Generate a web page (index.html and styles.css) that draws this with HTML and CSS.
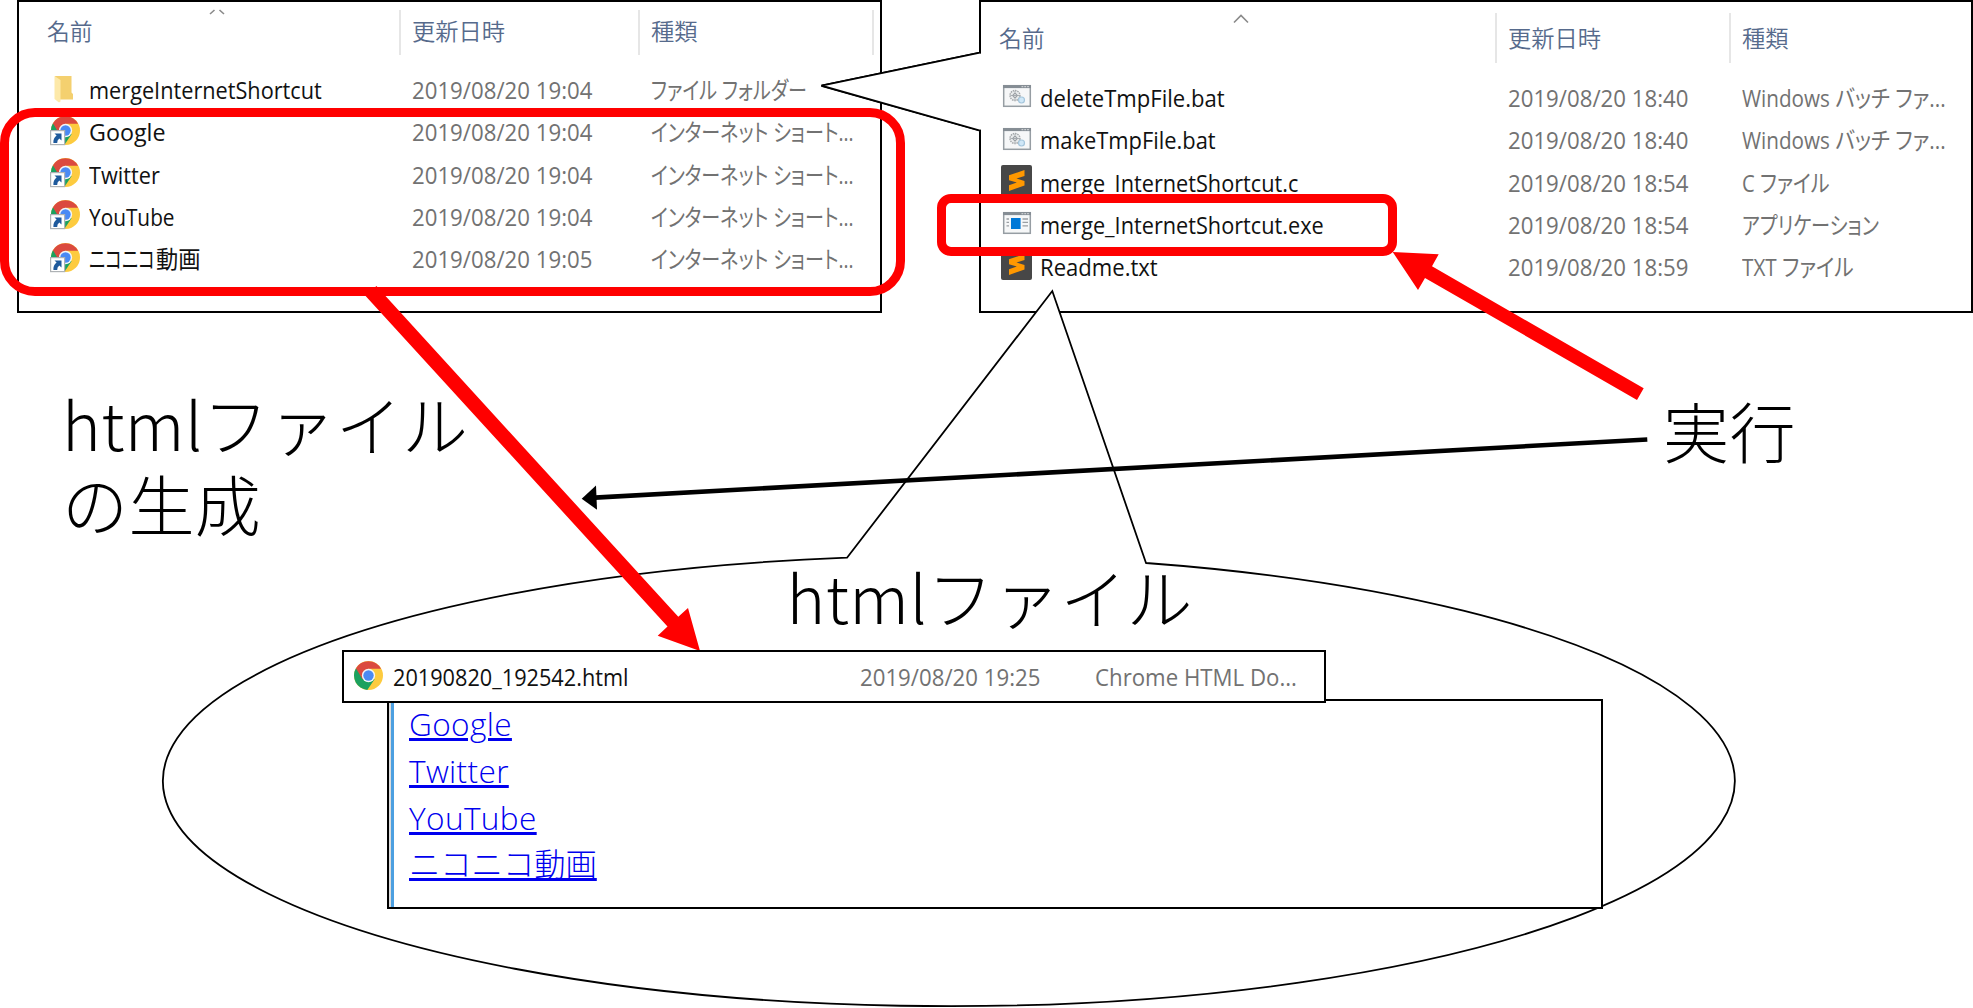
FILE: index.html
```html
<!DOCTYPE html>
<html lang="ja">
<head>
<meta charset="utf-8">
<title>mergeInternetShortcut</title>
<link rel="stylesheet" href="styles.css">
</head>
<body>
<svg class="defs" width="0" height="0" aria-hidden="true">
  <symbol id="chrome" viewBox="0 0 48 48">
    <circle cx="24" cy="24" r="24" fill="#fdcb3f"/>
    <path d="M24 24 3.2 12A24 24 0 0 0 22 47.9L34 30Z" fill="#1ba15f"/>
    <path d="M24 13H44.8A24 24 0 0 0 3.2 12L14 30Z" fill="#db4a3f"/>
    <circle cx="24" cy="24" r="11" fill="#f4f6f8"/>
    <circle cx="24" cy="24" r="8.6" fill="#4a8af4"/>
  </symbol>
  <symbol id="shortcut" viewBox="0 0 30 30">
    <svg x="1" y="0" width="29" height="29"><use href="#chrome"/></svg>
    <rect x=".6" y="14.6" width="14" height="14" fill="#fff" stroke="#aeb2b5" stroke-width="1.2"/>
    <path d="M4.5 17.5H11.5V24.5L9.3 22.4Q7 24 7.2 27H3.4Q3 22.5 6.6 19.6Z" fill="#1f5a9c"/>
  </symbol>
  <symbol id="folder" viewBox="0 0 20 28">
    <path d="M1 1H17.5V17.5L19 19V24.5H5Z" fill="#f4d06f"/>
    <path d="M.5 1 6.5 5V26.5L5 27.5.5 24Z" fill="#fde9a9"/>
  </symbol>
  <symbol id="bat" viewBox="0 0 30 24">
    <rect x="1.7" y="1.7" width="26.6" height="20.6" fill="#f6f7f8" stroke="#969da3" stroke-width="1.5"/>
    <path d="M1 2.6H29" stroke="#858d94" stroke-width="3"/>
    <path d="M19.5 2.6H27" stroke="#c9cdd0" stroke-width="1.2" stroke-dasharray="1.8 1"/>
    <circle cx="13" cy="11.5" r="5" fill="#e9ebec" stroke="#a4a8ab" stroke-width="1.4" stroke-dasharray="1.5 .8"/>
    <circle cx="13" cy="11.5" r="2" fill="#fff" stroke="#92989d"/>
    <path d="M8.5 11.5H17.5M13 7V16" stroke="#92989d" stroke-width=".7"/>
    <circle cx="19.5" cy="16" r="3" fill="#cfe7f7" stroke="#a5c6dc" stroke-width="1.2"/>
  </symbol>
  <symbol id="exe" viewBox="0 0 30 24">
    <rect x="1.7" y="1.7" width="26.6" height="20.6" fill="#f6f7f8" stroke="#969da3" stroke-width="1.5"/>
    <path d="M1 2.6H29" stroke="#858d94" stroke-width="3"/>
    <path d="M19.5 2.6H27" stroke="#c9cdd0" stroke-width="1.2" stroke-dasharray="1.8 1"/>
    <rect x="9" y="7" width="9.6" height="11" fill="#0078d7"/>
    <path d="M4.5 8H7M4.5 11.4H7M4.5 14.8H7M20.5 8H26M20.5 11.4H26M20.5 14.8H26" stroke="#9a9fa3" stroke-width="1.3"/>
  </symbol>
  <symbol id="sublime" viewBox="0 0 31 31">
    <rect width="31" height="31" rx="2" fill="#474747"/>
    <path d="M8 10.3 23.5 5V11L15.5 13.6 23.5 16V20.5L8 26V20.3L15.8 17.6 8 15.2Z" fill="#ff9800"/>
  </symbol>
</svg>

<main class="diagram">
  <section class="pane pane-left">
    <svg class="caret" width="18" height="8" viewBox="0 0 18 8"><path d="M2 6 6.5 2M11.5 2 16 6"/></svg>
    <header class="row head">
      <span class="cell"><span class="t s95">名前</span></span>
      <span class="cell"><span class="t s100">更新日時</span></span>
      <span class="cell"><span class="t s100">種類</span></span>
      <span class="cell"></span>
    </header>
    <div class="row">
      <svg class="icon folder"><use href="#folder"/></svg>
      <span class="name t s90">mergeInternetShortcut</span><span class="t s93">2019/08/20 19:04</span><span class="t s79">ファイル フォルダー</span>
    </div>
    <div class="row">
      <svg class="icon link"><use href="#shortcut"/></svg>
      <span class="name t s97">Google</span><span class="t s93">2019/08/20 19:04</span><span class="t s79">インターネット ショート...</span>
    </div>
    <div class="row">
      <svg class="icon link"><use href="#shortcut"/></svg>
      <span class="name t s90">Twitter</span><span class="t s93">2019/08/20 19:04</span><span class="t s79">インターネット ショート...</span>
    </div>
    <div class="row">
      <svg class="icon link"><use href="#shortcut"/></svg>
      <span class="name t s87">YouTube</span><span class="t s93">2019/08/20 19:04</span><span class="t s79">インターネット ショート...</span>
    </div>
    <div class="row">
      <svg class="icon link"><use href="#shortcut"/></svg>
      <span class="name t s93"><span class="kana">ニコニコ</span>動画</span><span class="t s93">2019/08/20 19:05</span><span class="t s79">インターネット ショート...</span>
    </div>
  </section>

  <section class="pane pane-right">
    <svg class="caret" width="18" height="10" viewBox="0 0 18 10"><path d="M2 8.5 9 1.5 16 8.5"/></svg>
    <header class="row head">
      <span class="cell"><span class="t s95">名前</span></span>
      <span class="cell"><span class="t s100">更新日時</span></span>
      <span class="cell"><span class="t s100">種類</span></span>
    </header>
    <div class="row">
      <svg class="icon app"><use href="#bat"/></svg>
      <span class="name t s92">deleteTmpFile.bat</span><span class="t s93">2019/08/20 18:40</span><span class="t s86">Windows バッチ ファ...</span>
    </div>
    <div class="row">
      <svg class="icon app"><use href="#bat"/></svg>
      <span class="name t s91">makeTmpFile.bat</span><span class="t s93">2019/08/20 18:40</span><span class="t s86">Windows バッチ ファ...</span>
    </div>
    <div class="row">
      <svg class="icon sublime"><use href="#sublime"/></svg>
      <span class="name t s90">merge_InternetShortcut.c</span><span class="t s93">2019/08/20 18:54</span><span class="t s84">C ファイル</span>
    </div>
    <div class="row">
      <svg class="icon app"><use href="#exe"/></svg>
      <span class="name t s90">merge_InternetShortcut.exe</span><span class="t s93">2019/08/20 18:54</span><span class="t s80">アプリケーション</span>
    </div>
    <div class="row">
      <svg class="icon sublime"><use href="#sublime"/></svg>
      <span class="name t s92">Readme.txt</span><span class="t s93">2019/08/20 18:59</span><span class="t s86">TXT ファイル</span>
    </div>
  </section>

  <svg class="layer" viewBox="0 0 1973 1008">
    <path class="outline" d="M980 52.7 821.5 85.7 980 130.5V312H1972V1H980Z"/>
    <path class="callout" d="M980 52.7 821.5 85.7 980 130.5"/>
    <path class="callout" d="M847 557.7 1052.3 291 1146 563A786 225.2 0 1 1 847 557.7Z"/>
  </svg>

  <div class="mark mark-left"></div>
  <div class="mark mark-right"></div>

  <p class="label label-make">htmlファイル<br>の生成</p>
  <p class="label label-file">htmlファイル</p>
  <p class="label label-run">実行</p>

  <section class="page">
    <a>Google</a>
    <a>Twitter</a>
    <a>YouTube</a>
    <a class="cjk">ニコニコ動画</a>
  </section>

  <svg class="layer" viewBox="0 0 1973 1008">
    <path class="red" d="M376.4 286.1 678.3 616.7 688 608 700 651 657.7 635.7 667.5 626.5 365.6 295.9Z"/>
    <path class="red" d="M1643.7 388.3 1432 266.3 1438.7 254.3 1392.7 252 1418 290 1425 278 1637 400Z"/>
    <path class="black-line" d="M595 497.6 1647.3 439.5"/>
    <path d="M581.7 498.7 596 485.5 597 509.7Z"/>
  </svg>

  <section class="output row">
    <svg class="icon chrome"><use href="#chrome"/></svg>
    <span class="name t s90">20190820_192542.html</span><span class="t s93">2019/08/20 19:25</span><span class="t s93">Chrome HTML Do...</span>
  </section>
</main>
</body>
</html>
```
FILE: styles.css
```css
* { box-sizing: border-box; }
body { margin: 0; background: #fff; }
.defs { position: absolute; }

.diagram {
  position: relative;
  width: 1973px;
  height: 1008px;
  overflow: hidden;
  font: 24px/42.2px "Open Sans", "Noto Sans CJK JP", sans-serif;
  color: #727272;
}

/* file list windows */
.pane { position: absolute; top: 0; height: 313px; }
.pane-left { left: 17px; width: 865px; border: 2px solid #000; padding-top: 8px; --cols: 69.5px 323.5px 239px 1fr; }
.pane-right { left: 979px; width: 994px; padding-top: 13px; --cols: 61px 468px 234px 1fr; }

.row { display: grid; grid-template-columns: var(--cols); height: 42.2px; align-items: center; white-space: nowrap; }
.name { color: #111; }
.icon { display: block; }
.folder { width: 20px; height: 28px; margin: -2px 0 0 35px; }
.link { width: 30px; height: 30px; margin: -3px 0 0 31px; }
.app { width: 30px; height: 24px; margin: -4px 0 0 23px; }
.sublime { width: 31px; height: 31px; margin: -5px 0 0 22px; }
.chrome { width: 29px; height: 29px; margin: -4px 0 0 10px; }

.head { height: auto; color: #566a8c; font-size: 23px; font-weight: 350; }
.head .cell { height: 45px; border-right: 2px solid #e6e6e6; line-height: 42px; }
.pane-left .head { grid-template-columns: 382px 239px 234px 1fr; margin-bottom: 14.3px; }
.pane-left .head .cell { padding-left: 11px; }
.pane-left .head .cell:first-child { padding-left: 28px; }
.pane-left .head .cell:last-child { border: 0; }
.pane-right .head { grid-template-columns: 518px 234px 1fr; margin-bottom: 14.3px; }
.pane-right .head .cell { height: 50px; line-height: 51px; padding-left: 11px; }
.pane-right .head .cell:first-child { padding-left: 20px; }
.pane-right .head .cell:last-child { border: 0; }

.caret { position: absolute; fill: none; stroke: #8a8a8a; stroke-width: 1.6; }
.pane-left .caret { left: 189px; top: 6px; }
.pane-right .caret { left: 253px; top: 14px; }

/* condensed text */
.t { display: inline-block; justify-self: start; transform-origin: 0 50%; transform: scaleX(var(--sx)); font-feature-settings: "palt"; }
.s79 { --sx: .795; }
.s80 { --sx: .8; }
.s84 { --sx: .838; }
.s86 { --sx: .861; }
.s87 { --sx: .867; }
.s90 { --sx: .904; }
.s91 { --sx: .912; }
.s92 { --sx: .92; }
.s93 { --sx: .926; }
.s95 { --sx: .99; }
.s97 { --sx: .97; }
.s100 { --sx: 1.012; }
.kana { display: inline-block; transform: scaleX(.79); transform-origin: 0 50%; margin-right: -17.5px; }

/* connectors and callouts */
.layer { position: absolute; inset: 0; width: 1973px; height: 1008px; }
.outline { fill: none; stroke: #000; stroke-width: 2; }
.callout { fill: #fff; stroke: #000; stroke-width: 1.8; }
.red { fill: #f00; }
.black-line { stroke: #000; stroke-width: 4.6; }

.mark { position: absolute; border: 9px solid #f00; }
.mark-left { left: 0; top: 108px; width: 905px; height: 188px; border-radius: 35px; }
.mark-right { left: 937px; top: 194px; width: 460px; height: 62px; border-radius: 14px; }

.label { position: absolute; margin: 0; color: #000; font: 300 66px/80px "Noto Sans CJK JP", sans-serif; letter-spacing: .4px; white-space: nowrap; }
.label-make { left: 62px; top: 381.5px; }
.label-file { left: 786.5px; top: 554.5px; }
.label-run { left: 1663px; top: 388.5px; }

/* generated page */
.page {
  position: absolute;
  left: 387px;
  top: 699px;
  width: 1216px;
  height: 210px;
  padding: 0 0 0 20px;
  display: flex;
  flex-direction: column;
  align-items: flex-start;
  background: #fff;
  border: 2px solid #000;
  box-shadow: inset 2px 0 #dcdcdc, inset 5px 0 #4c9fe0;
  font: 350 31.6px/46.8px "Open Sans", "Noto Sans CJK JP", sans-serif;
  letter-spacing: .35px;
}
.page a { color: #0000ee; text-decoration: underline; text-decoration-thickness: 3px; text-underline-offset: 2px; }
.page .cjk { font-size: 31.3px; font-weight: 300; letter-spacing: 0; }

.output {
  position: absolute;
  left: 342px;
  top: 650px;
  width: 984px;
  height: 53px;
  background: #fff;
  border: 2px solid #000;
  padding-top: 2px;
  --cols: 48.5px 467.5px 234.5px 1fr;
}
```
